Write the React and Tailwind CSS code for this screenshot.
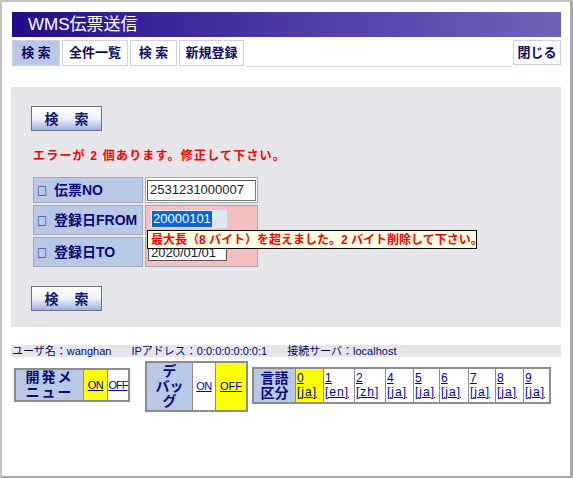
import { useState } from 'react'

const FONT = "font-['Liberation_Sans','Noto_Sans_CJK_JP',sans-serif]"

const TABS = [
  { label: '検 索', active: true, w: 'w-[48px]' },
  { label: '全件一覧', w: 'w-[66px]' },
  { label: '検 索', w: 'w-[47px]' },
  { label: '新規登録', w: 'w-[65px]' },
]

const LANGS = [
  { n: '0', code: 'ja', on: true, w: 'w-[27px]' },
  { n: '1', code: 'en', w: 'w-[30px]' },
  { n: '2', code: 'zh', w: 'w-[30px]' },
  { n: '4', code: 'ja', w: 'w-[27px]' },
  { n: '5', code: 'ja', w: 'w-[25px]' },
  { n: '6', code: 'ja', w: 'w-[28px]' },
  { n: '7', code: 'ja', w: 'w-[26px]' },
  { n: '8', code: 'ja', w: 'w-[27px]' },
  { n: '9', code: 'ja', w: 'w-[25px]' },
]

function SearchButton() {
  return (
    <button className="w-[71px] h-[25px] border border-[#6c7080] bg-gradient-to-b from-white via-[#eef2fa] to-[#9fb1de] text-[#0a1a6e] text-[14px] font-bold tracking-[6px] pl-[6px] leading-none">
      検 索
    </button>
  )
}

function Label({ children, h }) {
  return (
    <div className={`w-[110px] ${h} bg-[#b9c9e5] border border-[#a3aab8] flex items-center pl-[3px] text-[#0a0a78] text-[14px] font-bold whitespace-nowrap`}>
      <span className="font-['Noto_Sans_CJK_JP',sans-serif] font-black text-[10px] mr-[7px]">□</span>
      {children}
    </div>
  )
}

export default function App() {
  const [devMenu] = useState(true)

  return (
    <div className={`${FONT} w-[573px] h-[478px] bg-white border-l-2 border-t-2 border-[#c4c4c4] border-r-[3px] border-r-[#a8a8a8] border-b-2 border-b-[#a8a8a8] pl-[9px] pr-[9px] pt-[10px]`}>
      {/* title */}
      <div className="ml-[1px] h-[25px] bg-gradient-to-r from-[#23098a] via-[#4d38a6] to-[#7162b8] flex items-center pl-[16px] text-white text-[17px] leading-none">
        WMS伝票送信
      </div>

      {/* tabs */}
      <div className="flex items-start mt-[3px] ml-[1px] h-[27px]">
        {TABS.map((t, i) => (
          <div
            key={i}
            className={`${t.w} h-[26px] mr-[2px] flex items-center justify-center border border-[#c8d3ea] text-[13px] font-bold text-[#0a0a60] whitespace-nowrap ${t.active ? 'bg-[#b9c9e5]' : 'bg-white'}`}
          >
            {t.label}
          </div>
        ))}
        <div className="flex-1 h-[27px] border-b border-[#d0d8ec]" />
        <div className="w-[48px] h-[25px] ml-[2px] border border-[#c8d3ea] flex items-center justify-center text-[13px] font-bold text-[#0a0a60]">
          閉じる
        </div>
      </div>

      {/* main panel */}
      <div className="mt-[20px] h-[240px] bg-[#e6e6ea] pl-[20px] pt-[19px]">
        <SearchButton />
        <div className="mt-[16px] ml-[2px] text-[#ff0000] text-[12px] font-bold tracking-[1.2px] whitespace-nowrap">
          エラーが 2 個あります。修正して下さい。
        </div>

        <div className="relative mt-[12px] ml-[2px] flex flex-col gap-[2px] w-[226px]">
          <div className="flex gap-[2px]">
            <Label h="h-[26px]">伝票NO</Label>
            <div className="w-[113px] h-[26px] border border-[#a3aab8] bg-white flex items-center px-[1px]">
              <div className="w-[109px] h-[21px] border border-[#7a7a7a] border-t-[#555] border-l-[#555] bg-white text-[13px] text-[#222] flex items-center pl-[2px]">
                2531231000007
              </div>
            </div>
          </div>
          <div className="flex gap-[2px]">
            <Label h="h-[30px]">登録日FROM</Label>
            <div className="w-[113px] h-[30px] border border-[#a3aab8] bg-[#f4c0bf] flex items-center pl-[4px]">
              <div className="w-[78px] h-[20px] border border-[#e6c8c8] bg-[#dbe8fa] flex items-center pl-[1px] mt-[-3px]">
                <span className="bg-[#0a64d6] text-white text-[13px] leading-[16px] px-[1px]">20000101</span>
              </div>
            </div>
          </div>
          <div className="flex gap-[2px]">
            <Label h="h-[30px]">登録日TO</Label>
            <div className="w-[113px] h-[30px] border border-[#a3aab8] bg-[#f4c0bf] flex items-start pl-[2px] pt-[1px]">
              <div className="w-[79px] h-[22px] border border-[#555] bg-white text-[13px] text-[#222] flex items-end pl-[2px] leading-[15px]">
                2020/01/01
              </div>
            </div>
          </div>

          {/* tooltip */}
          <div className="absolute left-[114px] top-[53px] w-[330px] h-[19px] bg-[#ffffe1] border border-black flex items-center pl-[3px] text-[#ff0000] text-[12px] font-bold whitespace-nowrap">
            最大長（8 バイト）を超えました。2 バイト削除して下さい。
          </div>
        </div>

        <div className="mt-[19px]">
          <SearchButton />
        </div>
      </div>

      {/* info line */}
      <div className="mt-[18px] h-[12px] bg-[#e6e6ea] flex items-center pl-[1px] text-[11px] leading-none text-[#0a0a60] whitespace-nowrap">
        <span>ユーザ名：wanghan</span>
        <span className="ml-[20px]">IPアドレス：0:0:0:0:0:0:0:1</span>
        <span className="ml-[20px]">接続サーバ：localhost</span>
      </div>

      {/* settings */}
      <div className="flex items-start mt-[4px] ml-[3px]">
        <div className="mt-[7px] flex border-2 border-[#8c8c8c] bg-[#8c8c8c] gap-[1px] h-[34px]">
          <div className="w-[67px] bg-[#b9c9e5] flex items-center justify-center text-center text-[14px] font-bold text-[#0a0a78] leading-[15px] tracking-[2px]">
            開発メ<br />ニュー
          </div>
          <div className={`w-[23px] flex items-center justify-center ${devMenu ? 'bg-[#ffff00]' : 'bg-white'}`}>
            <a className="text-[11px] text-[#0000b4] underline tracking-[-0.5px]">ON</a>
          </div>
          <div className="w-[20px] bg-white flex items-center justify-center">
            <a className="text-[11px] text-[#0000b4] underline tracking-[-1px]">OFF</a>
          </div>
        </div>

        <div className="ml-[15px] flex border-2 border-[#8c8c8c] bg-[#8c8c8c] gap-[1px] h-[51px]">
          <div className="w-[45px] bg-[#b9c9e5] flex items-center justify-center text-center text-[14px] font-bold text-[#0a0a78] leading-[15px]">
            デ<br />バッ<br />グ
          </div>
          <div className="w-[22px] bg-white flex items-center justify-center">
            <a className="text-[11px] text-[#0000b4] underline tracking-[-0.5px]">ON</a>
          </div>
          <div className="w-[30px] bg-[#ffff00] flex items-center justify-center">
            <a className="text-[11px] text-[#0000b4] underline">OFF</a>
          </div>
        </div>

        <div className="ml-[4px] mt-[6px] flex border-2 border-[#8c8c8c] bg-[#8c8c8c] gap-[1px] h-[37px]">
          <div className="w-[41px] bg-[#b9c9e5] flex items-center justify-center text-center text-[14px] font-bold text-[#0a0a78] leading-[15px]">
            言語<br />区分
          </div>
          {LANGS.map((l, i) => (
            <div key={i} className={`${l.w} flex flex-col justify-center pl-[1px] ${l.on ? 'bg-[#ffff00]' : 'bg-white'}`}>
              <a className="text-[12px] leading-[13px] text-[#0000b4] underline">{l.n}</a>
              <a className="text-[12px] leading-[14px] text-[#0000b4] underline tracking-[1px]">[{l.code}]</a>
            </div>
          ))}
        </div>
      </div>
    </div>
  )
}
